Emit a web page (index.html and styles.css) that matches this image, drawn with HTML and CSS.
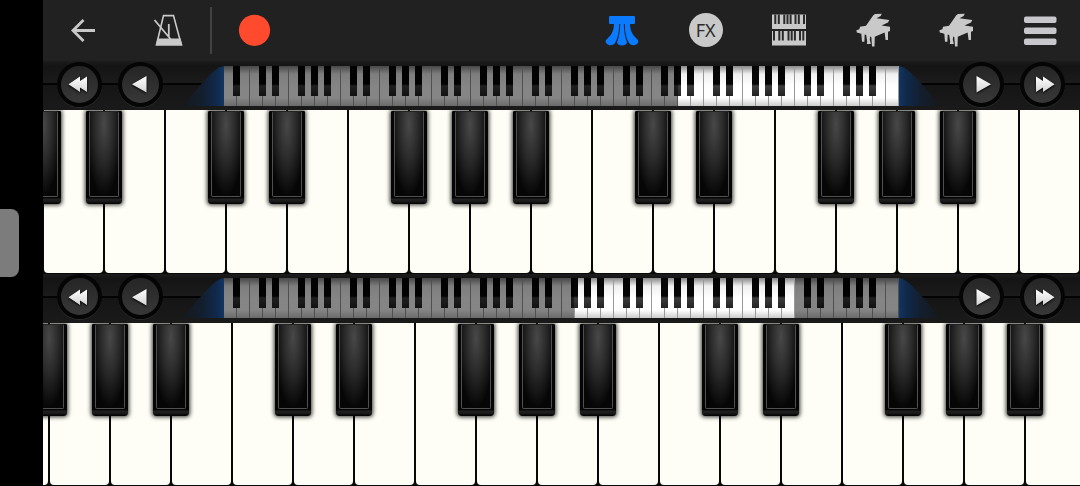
FILE: index.html
```html
<!DOCTYPE html>
<html lang="en">
<head>
<meta charset="utf-8">
<meta name="viewport" content="width=device-width, initial-scale=1">
<title>Piano</title>
<link rel="stylesheet" href="styles.css">
</head>
<body>
<svg class="defs" aria-hidden="true">
  <defs>
    <linearGradient id="arrow-fill" x1="0" y1="0" x2="0" y2="1">
      <stop offset="0" stop-color="#fff"/><stop offset="1" stop-color="#d4d4d4"/>
    </linearGradient>
    <linearGradient id="ramp-fill" x1="0" y1="0" x2="1" y2="0">
      <stop offset="0" stop-color="#161819"/><stop offset="0.5" stop-color="#131e2e"/><stop offset="0.85" stop-color="#102a4c"/><stop offset="1" stop-color="#123562"/>
    </linearGradient>
    <symbol id="icon-prev" viewBox="0 0 24 24"><path d="M3 12.300 17.500 4v16.600z" fill="url(#arrow-fill)"/></symbol>
    <symbol id="icon-rewind" viewBox="0 0 24 24"><path d="M.5 12.300 12 4.500v4.500L19 4.500v15.500l-7-4.500V20z" fill="url(#arrow-fill)"/></symbol>
    <symbol id="icon-ramp" viewBox="0 0 44 40"><path d="M0 40C12 31 27 9 39 1.500L44 0v40z" fill="url(#ramp-fill)"/></symbol>
    <symbol id="icon-grand" viewBox="0 0 34 34">
      <path d="M17.300 2.300 19 1 25.700.7 24.700 3 20.500 5.300 33.300 7 32 9.500 25.500 12.500 34 13.700V18l-2 .7V27h-2.400l-1-7.500-9.800 4.300-.3 9.700H16L15.300 24l-1.100-.5-.4 3 1 4.500h-4l.4-2-1-7-1.500-.5-.3 7.300H6L5.300 20.700.8 19.600.4 17.300l3-1 .6-2.600 6-.9z" fill="#c9c9c9"/>
    </symbol>
  </defs>
</svg>

<div class="screen">
  <div class="gutter"><span class="handle"></span></div>
  <main class="app">
    <header class="toolbar">
      <div class="tools tools-left">
        <button class="tool" aria-label="Back">
          <svg viewBox="0 0 34 34"><path d="M17.500 7 7 17.500 17.500 28M7 17.500H29" fill="none" stroke="#c9c9c9" stroke-width="2.800"/></svg>
        </button>
        <button class="tool" aria-label="Metronome">
          <svg viewBox="0 0 34 34">
            <path d="M12.500 2.600h10L30.300 31.800H5.500z" fill="none" stroke="#c9c9c9" stroke-width="1.600"/>
            <path d="M6.800 25.500H29.500l2 7H4.700z" fill="#c9c9c9"/>
            <path d="M3.500 7 19.500 26M17.800 11V24" stroke="#c9c9c9" stroke-width="1.800"/>
          </svg>
        </button>
        <span class="divider"></span>
        <button class="tool" aria-label="Record">
          <svg viewBox="0 0 34 34"><circle cx="17.500" cy="17.300" r="15.600" fill="#ff4a2d"/></svg>
        </button>
      </div>
      <div class="tools tools-right">
        <button class="tool" aria-label="Sustain">
          <svg viewBox="0 0 34 34" fill="#0a7aff">
            <path d="M5 3H29a1 1 0 0 1 1 1v6a1 1 0 0 1-1 1H5a1 1 0 0 1-1-1V4a1 1 0 0 1 1-1z"/>
            <path d="M9 10H14.200C14.200 19 13 25 10 30 8 32.800 4 33 1.500 30.500 0 28.500.6 27.200 2.300 25.700 7 21.500 9 17 9 10z"/>
            <path d="M25 10H19.800C19.800 19 21 25 24 30 26 32.800 30 33 32.500 30.500 34 28.500 33.400 27.200 31.700 25.700 27 21.500 25 17 25 10z"/>
            <path d="M15.200 10h3.600C18.800 18 20 24 22 29.500 21.500 33.500 12.500 33.500 12 29.500 14 24 15.200 18 15.200 10z"/>
          </svg>
        </button>
        <button class="tool tool-fx">FX</button>
        <button class="tool" aria-label="Dual keyboard">
          <svg viewBox="0 0 34 34">
            <path d="M0 1.500H34V16H0zM0 18H34V32.600H0z" fill="#c9c9c9"/>
            <path d="M2.300 1.500h2v9.500h-2zM5.800 1.500h2v9.500h-2zM11.300 1.500h2v9.500h-2zM14.500 1.500h2v9.500h-2zM17.600 1.500h2v9.500h-2zM22.500 1.500h2v9.500h-2zM25.800 1.500h2v9.500h-2zM31 1.500h2v9.500h-2zM1 18h2v9.500H1zM6.300 18h2v9.500h-2zM9.800 18h2v9.500h-2zM15.500 18h2v9.500h-2zM18.700 18h2v9.500h-2zM21.900 18h2v9.500h-2zM27 18h2v9.500h-2zM30.300 18h2v9.500h-2z" fill="#2a2a2a"/>
          </svg>
        </button>
        <button class="tool" aria-label="Upper instrument"><svg><use href="#icon-grand"/></svg></button>
        <button class="tool" aria-label="Lower instrument"><svg><use href="#icon-grand"/></svg></button>
        <button class="tool" aria-label="Menu">
          <svg viewBox="0 0 34 34" fill="#c8c8cc"><rect x="1" y="3.500" width="32.500" height="6.600" rx="2"/><rect x="1" y="14.500" width="32.500" height="6.600" rx="2"/><rect x="1" y="25.500" width="32.500" height="6.600" rx="2"/></svg>
        </button>
      </div>
    </header>

    <nav class="range" aria-label="Upper keyboard range">
      <div class="side">
        <button class="step" aria-label="Octave down"><svg><use href="#icon-rewind"/></svg></button>
        <button class="step" aria-label="Key down"><svg><use href="#icon-prev"/></svg></button>
        <svg class="ramp"><use href="#icon-ramp"/></svg>
      </div>
      <div class="mini" data-first="35" data-visible="17"></div>
      <div class="side side-right">
        <svg class="ramp flip"><use href="#icon-ramp"/></svg>
        <button class="step" aria-label="Key up"><svg class="flip"><use href="#icon-prev"/></svg></button>
        <button class="step" aria-label="Octave up"><svg class="flip"><use href="#icon-rewind"/></svg></button>
      </div>
    </nav>
    <section class="keyboard" aria-label="Upper keyboard">
      <div class="keys" data-first="34" data-count="18"></div>
    </section>

    <nav class="range" aria-label="Lower keyboard range">
      <div class="side">
        <button class="step" aria-label="Octave down"><svg><use href="#icon-rewind"/></svg></button>
        <button class="step" aria-label="Key down"><svg><use href="#icon-prev"/></svg></button>
        <svg class="ramp"><use href="#icon-ramp"/></svg>
      </div>
      <div class="mini" data-first="27" data-visible="17"></div>
      <div class="side side-right">
        <svg class="ramp flip"><use href="#icon-ramp"/></svg>
        <button class="step" aria-label="Key up"><svg class="flip"><use href="#icon-prev"/></svg></button>
        <button class="step" aria-label="Octave up"><svg class="flip"><use href="#icon-rewind"/></svg></button>
      </div>
    </nav>
    <section class="keyboard" aria-label="Lower keyboard">
      <div class="keys keys-lower" data-first="26" data-count="18"></div>
    </section>
  </main>
</div>
<script src="keys.js"></script>
</body>
</html>
```
FILE: styles.css
```css
* { box-sizing: border-box; }

body {
  margin: 0;
  background: #000;
  font-family: "Noto Sans", "Open Sans", sans-serif;
}

button {
  padding: 0;
  border: 0;
  background: none;
  font: inherit;
  cursor: pointer;
}

svg { display: block; width: 100%; height: 100%; }
.defs { position: absolute; width: 0; height: 0; }
.flip { transform: scaleX(-1); }

.screen { display: flex; height: 100vh; overflow: hidden; }

.gutter { flex: 0 0 43px; display: flex; align-items: center; }
.handle {
  width: 19px;
  height: 68px;
  border-radius: 0 8px 8px 0;
  background: #7c7c7c;
}

.app { flex: 1; min-width: 0; display: flex; flex-direction: column; }

.toolbar {
  flex: 0 0 61px;
  display: flex;
  align-items: center;
  justify-content: space-between;
  padding: 0 23px 1px;
  background: #212121;
}
.tools { display: flex; align-items: center; }
.tools-left { gap: 25px; }
.tools-left .tool:first-child { margin-right: 26px; }
.tools-right { flex: 0 1 452px; justify-content: space-between; }
.tool { flex: none; width: 34px; height: 34px; }
.divider { width: 2px; height: 47px; background: #424242; }
.tool-fx {
  border-radius: 50%;
  background: #c9c9c9;
  color: #2c2c2c;
  font-size: 18px;
  line-height: 34px;
}

.range {
  flex: 0 0 49px;
  display: flex;
  align-items: center;
  background:
    linear-gradient(transparent 22px, #030303 22px, #030303 24px, transparent 24px),
    linear-gradient(#1c1c1c, #141414 5px, #1b1b1b 22px, #151515 24px, #1a1a1a);
}
.side {
  flex: 0 0 181px;
  display: flex;
  align-items: center;
  padding-left: 14px;
  gap: 16px;
}
.side-right { padding: 0 15px 0 0; }
.ramp { flex: 0 0 44px; height: 40px; margin-left: auto; }
.side-right .ramp { margin: 0 auto 0 0; }
.step {
  flex: none;
  display: flex;
  align-items: center;
  justify-content: center;
  width: 45px;
  height: 45px;
  margin-bottom: 3px;
  border: 4px solid #050505;
  border-radius: 50%;
  background: linear-gradient(#252525, #383838);
  box-shadow: 0 1px 0 #2c2c2c;
}
.step svg { width: 24px; height: 24px; filter: drop-shadow(0 1px 1px #000); }

.mini { flex: 1; position: relative; display: flex; height: 40px; background: #777; }
.mini-key {
  flex: 1;
  position: relative;
  border-right: 1px solid #999;
  background: linear-gradient(#888, #f0f0f0 8px, #fff 20px, #fff 32px, #ccc);
}
.mini-key.sharp::after {
  content: "";
  position: absolute;
  z-index: 1;
  top: 0;
  right: -4px;
  width: 7px;
  height: 30px;
  background: linear-gradient(#050505 18px, #3c3c3c 20px, #222);
}
.shades { position: absolute; inset: 0; z-index: 2; display: flex; }
.shade { background: rgba(0, 0, 0, 0.48); }

.keyboard { flex: 1; min-height: 0; overflow: hidden; background: #080808; }
.keys { display: flex; height: 100%; margin-left: -61px; padding-bottom: 1px; }
.keys-lower { margin-left: -55px; margin-right: -6px; }
.key { flex: 1; position: relative; padding-left: 1px; padding-right: 1px; }
.white {
  display: block;
  width: 100%;
  height: 100%;
  border-radius: 0 0 4px 4px;
  background: #fefef6;
}
.black {
  position: absolute;
  z-index: 1;
  top: 1px;
  left: 70%;
  width: 59%;
  height: 57%;
  padding: 0 3px 7px;
  border-radius: 1px 1px 3px 3px;
  background: linear-gradient(to top, #050505 1px, #161616 2px, #222 5px, #050505 6px);
  box-shadow: 0 0 4px 1px rgba(0, 0, 0, 0.8);
}
.black span {
  display: block;
  height: 100%;
  border: 1px solid #505050;
  border-top-color: #222;
  border-radius: 2px;
  background: radial-gradient(ellipse 65% 85% at 50% 15%, #484848, #2a2a2a 50%, #060606);
}
```
FILE: keys.js
```js
const LAST_KEY = 51;

// White keys are numbered from A0; B and E have no sharp to their right.
function hasSharp(index) {
  return index < LAST_KEY && ![1, 4].includes(index % 7);
}

function noteName(index) {
  return "ABCDEFG"[index % 7] + Math.floor((index + 5) / 7);
}

document.querySelectorAll(".keys").forEach((row) => {
  const first = Number(row.dataset.first);
  const count = Number(row.dataset.count);
  for (let i = first; i < first + count; i++) {
    const key = document.createElement("div");
    key.className = "key";
    key.innerHTML = `<button class="white" aria-label="${noteName(i)}"></button>`;
    if (hasSharp(i)) {
      key.innerHTML += `<button class="black" aria-label="${noteName(i)} sharp"><span></span></button>`;
    }
    row.append(key);
  }
});

document.querySelectorAll(".mini").forEach((mini) => {
  const total = LAST_KEY + 1;
  const first = Number(mini.dataset.first);
  const visible = Number(mini.dataset.visible);
  for (let i = 0; i < total; i++) {
    const key = document.createElement("span");
    key.className = "mini-key" + (hasSharp(i) ? " sharp" : "");
    mini.append(key);
  }
  const shades = document.createElement("div");
  shades.className = "shades";
  [first, visible, total - first - visible].forEach((size, part) => {
    const shade = document.createElement("span");
    shade.className = part === 1 ? "window" : "shade";
    shade.style.flex = `${size} 0 0`;
    shades.append(shade);
  });
  mini.append(shades);
});
```
